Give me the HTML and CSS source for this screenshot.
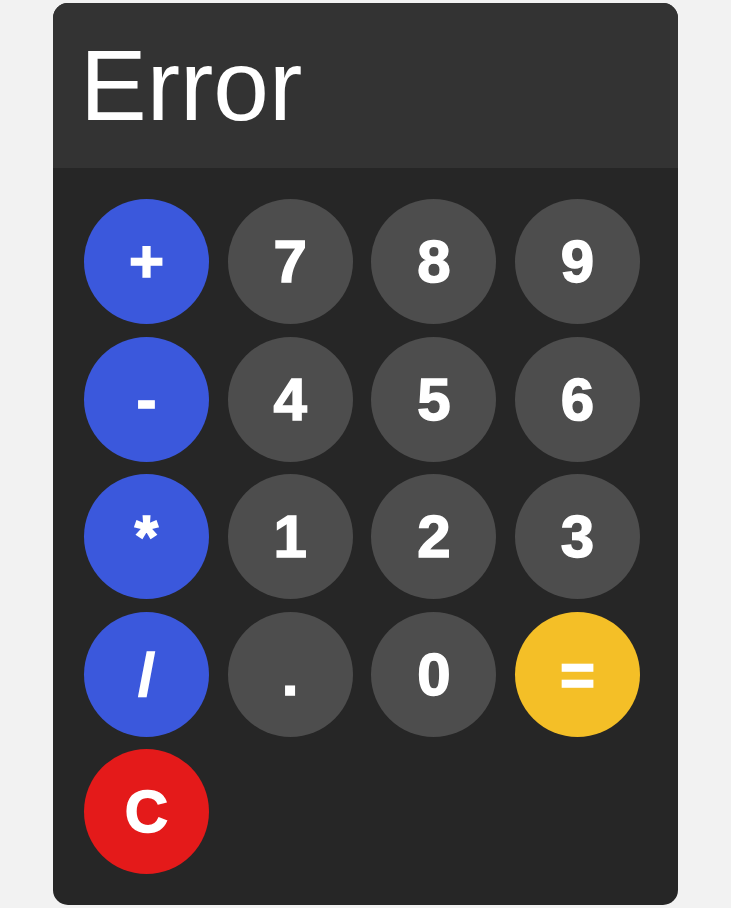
FILE: index.html
```html
<!DOCTYPE html>
<html>
<head>
<meta charset="utf-8">
<link rel="stylesheet" href="styles.css">
</head>
<body>
<div class="calc">
  <div class="display">Error</div>
  <div class="keys">
    <button class="key op">+</button>
    <button class="key num">7</button>
    <button class="key num">8</button>
    <button class="key num">9</button>
    <button class="key op">-</button>
    <button class="key num">4</button>
    <button class="key num">5</button>
    <button class="key num">6</button>
    <button class="key op">*</button>
    <button class="key num">1</button>
    <button class="key num">2</button>
    <button class="key num">3</button>
    <button class="key op">/</button>
    <button class="key num">.</button>
    <button class="key num">0</button>
    <button class="key eq">=</button>
    <button class="key clear">C</button>
  </div>
</div>
</body>
</html>
```
FILE: styles.css
```css
html, body {
  margin: 0;
  padding: 0;
}
body {
  background: #f2f2f2;
  min-height: 908px;
  display: flex;
  align-items: center;
  justify-content: center;
  font-family: "Liberation Sans", Arial, sans-serif;
}
.calc {
  width: 625px;
  height: 902px;
  border-radius: 15px;
  overflow: hidden;
  background: #262626;
  display: flex;
  flex-direction: column;
}
.display {
  height: 165px;
  box-sizing: border-box;
  background: #333333;
  color: #ffffff;
  font-size: 100px;
  line-height: 1.15;
  padding: 25px 27px 0;
}
.keys {
  padding: 31px;
  display: grid;
  grid-template-columns: repeat(4, 125px);
  column-gap: 18.67px;
  row-gap: 12.5px;
}
.key {
  width: 125px;
  height: 125px;
  border: none;
  border-radius: 50%;
  padding: 0;
  margin: 0;
  color: #ffffff;
  font-family: "Liberation Sans", Arial, sans-serif;
  font-weight: 700;
  font-size: 60px;
  -webkit-text-stroke: 1.5px #ffffff;
  display: flex;
  align-items: center;
  justify-content: center;
}
.num { background: #4d4d4d; }
.op { background: #3b58dc; }
.eq { background: #f4bf27; }
.clear { background: #e41a1a; }
```
